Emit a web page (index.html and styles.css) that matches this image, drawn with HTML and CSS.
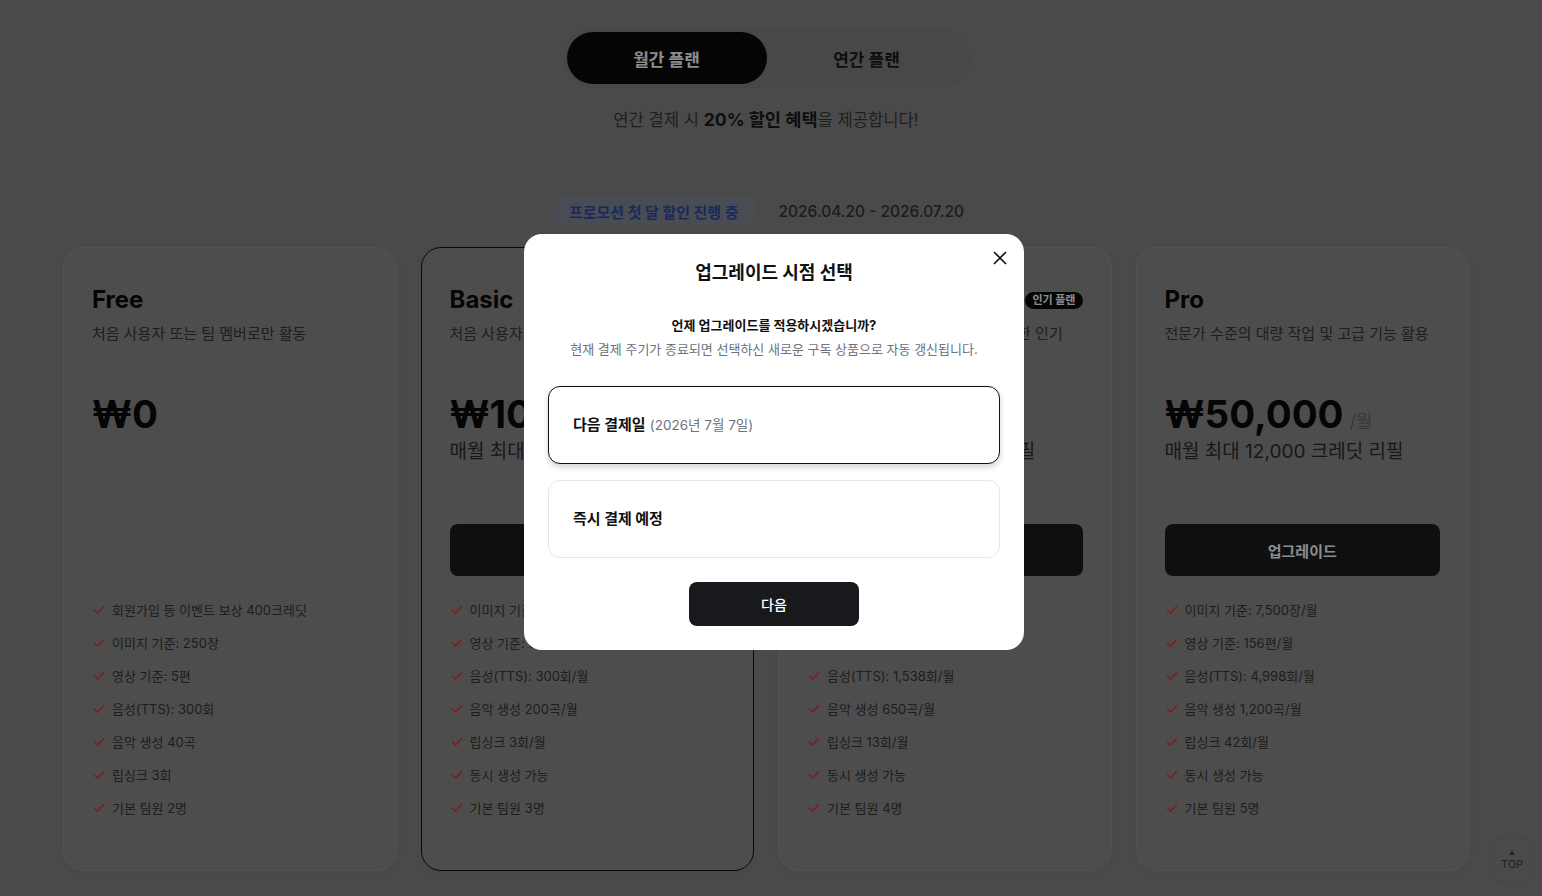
FILE: index.html
```html
<!DOCTYPE html>
<html lang="ko">
<head>
<meta charset="utf-8">
<title>요금제</title>
<link rel="stylesheet" href="styles.css">
</head>
<body>
<main class="page">
  <div class="toggle">
    <button class="toggle-btn active">월간 플랜</button>
    <button class="toggle-btn">연간 플랜</button>
  </div>
  <p class="discount">연간 결제 시 <strong>20% 할인 혜택</strong>을 제공합니다!</p>
  <div class="promo">
    <span class="promo-badge">프로모션 첫 달 할인 진행 중</span>
    <span class="promo-date">2026.04.20 - 2026.07.20</span>
  </div>

  <section class="cards">
    <article class="card">
      <div class="card-head"><h2 class="plan">Free</h2></div>
      <p class="desc">처음 사용자 또는 팀 멤버로만 활동</p>
      <div class="price-area">
        <div class="price">₩0</div>
      </div>
      <button class="cta placeholder">업그레이드</button>
      <ul class="features">
        <li><svg class="chk" viewBox="0 0 12 10"><path d="M1.5 5.2l3 3 6-6.4"/></svg>회원가입 등 이벤트 보상 400크레딧</li>
        <li><svg class="chk" viewBox="0 0 12 10"><path d="M1.5 5.2l3 3 6-6.4"/></svg>이미지 기준: 250장</li>
        <li><svg class="chk" viewBox="0 0 12 10"><path d="M1.5 5.2l3 3 6-6.4"/></svg>영상 기준: 5편</li>
        <li><svg class="chk" viewBox="0 0 12 10"><path d="M1.5 5.2l3 3 6-6.4"/></svg>음성(TTS): 300회</li>
        <li><svg class="chk" viewBox="0 0 12 10"><path d="M1.5 5.2l3 3 6-6.4"/></svg>음악 생성 40곡</li>
        <li><svg class="chk" viewBox="0 0 12 10"><path d="M1.5 5.2l3 3 6-6.4"/></svg>립싱크 3회</li>
        <li><svg class="chk" viewBox="0 0 12 10"><path d="M1.5 5.2l3 3 6-6.4"/></svg>기본 팀원 2명</li>
      </ul>
    </article>

    <article class="card current">
      <div class="card-head"><h2 class="plan">Basic</h2></div>
      <p class="desc">처음 사용자 및 개인 크리에이터에게 추천</p>
      <div class="price-area">
        <div class="price">₩10,000<span class="per">/월</span></div>
        <div class="refill">매월 최대 2,400 크레딧 리필</div>
      </div>
      <button class="cta">현재 플랜</button>
      <ul class="features">
        <li><svg class="chk" viewBox="0 0 12 10"><path d="M1.5 5.2l3 3 6-6.4"/></svg>이미지 기준: 1,500장/월</li>
        <li><svg class="chk" viewBox="0 0 12 10"><path d="M1.5 5.2l3 3 6-6.4"/></svg>영상 기준: 31편/월</li>
        <li><svg class="chk" viewBox="0 0 12 10"><path d="M1.5 5.2l3 3 6-6.4"/></svg>음성(TTS): 300회/월</li>
        <li><svg class="chk" viewBox="0 0 12 10"><path d="M1.5 5.2l3 3 6-6.4"/></svg>음악 생성 200곡/월</li>
        <li><svg class="chk" viewBox="0 0 12 10"><path d="M1.5 5.2l3 3 6-6.4"/></svg>립싱크 3회/월</li>
        <li><svg class="chk" viewBox="0 0 12 10"><path d="M1.5 5.2l3 3 6-6.4"/></svg>동시 생성 가능</li>
        <li><svg class="chk" viewBox="0 0 12 10"><path d="M1.5 5.2l3 3 6-6.4"/></svg>기본 팀원 3명</li>
      </ul>
    </article>

    <article class="card">
      <div class="card-head"><h2 class="plan">Standard</h2><span class="hot">인기 플랜</span></div>
      <p class="desc">영상 제작이 많은 크리에이터를 위한 인기 플랜</p>
      <div class="price-area">
        <div class="price">₩30,000<span class="per">/월</span></div>
        <div class="refill">매월 최대 7,200 크레딧 리필</div>
      </div>
      <button class="cta">업그레이드</button>
      <ul class="features">
        <li><svg class="chk" viewBox="0 0 12 10"><path d="M1.5 5.2l3 3 6-6.4"/></svg>이미지 기준: 4,500장/월</li>
        <li><svg class="chk" viewBox="0 0 12 10"><path d="M1.5 5.2l3 3 6-6.4"/></svg>영상 기준: 93편/월</li>
        <li><svg class="chk" viewBox="0 0 12 10"><path d="M1.5 5.2l3 3 6-6.4"/></svg>음성(TTS): 1,538회/월</li>
        <li><svg class="chk" viewBox="0 0 12 10"><path d="M1.5 5.2l3 3 6-6.4"/></svg>음악 생성 650곡/월</li>
        <li><svg class="chk" viewBox="0 0 12 10"><path d="M1.5 5.2l3 3 6-6.4"/></svg>립싱크 13회/월</li>
        <li><svg class="chk" viewBox="0 0 12 10"><path d="M1.5 5.2l3 3 6-6.4"/></svg>동시 생성 가능</li>
        <li><svg class="chk" viewBox="0 0 12 10"><path d="M1.5 5.2l3 3 6-6.4"/></svg>기본 팀원 4명</li>
      </ul>
    </article>

    <article class="card">
      <div class="card-head"><h2 class="plan">Pro</h2></div>
      <p class="desc">전문가 수준의 대량 작업 및 고급 기능 활용</p>
      <div class="price-area">
        <div class="price">₩50,000<span class="per">/월</span></div>
        <div class="refill">매월 최대 12,000 크레딧 리필</div>
      </div>
      <button class="cta">업그레이드</button>
      <ul class="features">
        <li><svg class="chk" viewBox="0 0 12 10"><path d="M1.5 5.2l3 3 6-6.4"/></svg>이미지 기준: 7,500장/월</li>
        <li><svg class="chk" viewBox="0 0 12 10"><path d="M1.5 5.2l3 3 6-6.4"/></svg>영상 기준: 156편/월</li>
        <li><svg class="chk" viewBox="0 0 12 10"><path d="M1.5 5.2l3 3 6-6.4"/></svg>음성(TTS): 4,998회/월</li>
        <li><svg class="chk" viewBox="0 0 12 10"><path d="M1.5 5.2l3 3 6-6.4"/></svg>음악 생성 1,200곡/월</li>
        <li><svg class="chk" viewBox="0 0 12 10"><path d="M1.5 5.2l3 3 6-6.4"/></svg>립싱크 42회/월</li>
        <li><svg class="chk" viewBox="0 0 12 10"><path d="M1.5 5.2l3 3 6-6.4"/></svg>동시 생성 가능</li>
        <li><svg class="chk" viewBox="0 0 12 10"><path d="M1.5 5.2l3 3 6-6.4"/></svg>기본 팀원 5명</li>
      </ul>
    </article>
  </section>
</main>

<button class="top-btn"><span class="top-arrow"></span>TOP</button>

<div class="overlay">
  <div class="modal" role="dialog">
    <button class="close" aria-label="닫기">
      <svg viewBox="0 0 14 14"><path d="M1.5 1.5l11 11M12.5 1.5l-11 11"/></svg>
    </button>
    <h3 class="modal-title">업그레이드 시점 선택</h3>
    <p class="modal-q">언제 업그레이드를 적용하시겠습니까?</p>
    <p class="modal-sub">현재 결제 주기가 종료되면 선택하신 새로운 구독 상품으로 자동 갱신됩니다.</p>
    <div class="options">
      <button class="option selected"><b>다음 결제일</b> <span class="opt-date">(2026년 7월 7일)</span></button>
      <button class="option"><b>즉시 결제 예정</b></button>
    </div>
    <button class="next">다음</button>
  </div>
</div>
</body>
</html>
```

FILE: styles.css
```css
* { box-sizing: border-box; }
html, body { margin: 0; height: 100%; overflow: hidden; }
body {
  background: #888888;
  font-family: "Inter", "Noto Sans CJK KR", "Noto Sans", sans-serif;
  color: #1a1a1a;
}
button { font-family: inherit; cursor: pointer; }

.page {
  width: 1406px;
  margin-left: 63px;
  padding-top: 28px;
  display: flex;
  flex-direction: column;
  align-items: center;
}

.toggle {
  display: flex;
  padding: 4px;
  background: #838383;
  border-radius: 30px;
  margin-left: 1px;
}
.toggle-btn {
  width: 200px;
  height: 52px;
  border: 0;
  border-radius: 26px;
  background: transparent;
  font-size: 17px;
  font-weight: 700;
  color: #1a1a1a;
}
.toggle-btn.active { background: #0a0a0a; color: #ffffff; }

.discount {
  margin: 20px 0 0;
  font-size: 16.6px;
  line-height: 24px;
  color: #3a3a3a;
}
.discount strong { font-size: 17.6px; color: #1a1a1a; font-weight: 700; }

.promo {
  margin-top: 64px;
  display: flex;
  align-items: center;
  gap: 24px;
  margin-right: 15px;
}
.promo-badge {
  height: 30px;
  padding: 0 16px;
  display: flex;
  align-items: center;
  border-radius: 9px;
  background: #878a98;
  color: #2e4da6;
  font-size: 15px;
  font-weight: 700;
}
.promo-date {
  font-size: 15.5px;
  font-weight: 500;
  color: #333333;
}

.cards {
  margin-top: 21px;
  width: 100%;
  display: grid;
  grid-template-columns: repeat(4, 1fr);
  gap: 24px;
}
.card {
  background: #8d8d8d;
  border: 1px solid #959595;
  border-radius: 20px;
  padding: 36px 28px 52px;
  box-shadow: 0 2px 8px rgba(0,0,0,0.06);
  display: flex;
  flex-direction: column;
}
.card.current { border-color: #111111; }

.card-head {
  display: flex;
  align-items: center;
  justify-content: space-between;
  height: 32px;
}
.plan {
  margin: 0;
  font-size: 24px;
  font-weight: 700;
  color: #0a0a0a;
  line-height: 32px;
}
.hot {
  background: #0a0a0a;
  color: #ffffff;
  font-size: 11px;
  font-weight: 700;
  line-height: 17px;
  padding: 0 7px;
  border-radius: 9px;
}
.desc {
  margin: 7px 0 0;
  height: 44px;
  font-size: 15px;
  line-height: 22px;
  color: #373737;
  word-break: keep-all;
}
.price-area {
  margin-top: 23px;
  height: 134px;
}
.price {
  height: 48px;
  display: flex;
  align-items: baseline;
  font-size: 38.5px;
  font-weight: 700;
  line-height: 48px;
  color: #0a0a0a;
}
.per {
  margin-left: 6px;
  font-size: 18px;
  font-weight: 400;
  color: #666666;
}
.refill {
  font-size: 19px;
  line-height: 28px;
  color: #2c2c2c;
}
.cta {
  height: 52px;
  border: 0;
  border-radius: 8px;
  background: #1a1c1f;
  color: #ffffff;
  font-size: 15px;
  font-weight: 700;
}
.cta.placeholder { visibility: hidden; }

.features {
  list-style: none;
  margin: 24px 0 0;
  padding: 0;
  display: flex;
  flex-direction: column;
  gap: 13px;
}
.features li {
  display: flex;
  align-items: center;
  font-size: 13px;
  line-height: 20px;
  color: #363636;
}
.chk {
  width: 12px;
  height: 10px;
  margin: 0 7px 0 1px;
  fill: none;
  stroke: #d84040;
  stroke-width: 1.8;
  stroke-linecap: round;
  stroke-linejoin: round;
}

.top-btn {
  position: fixed;
  right: 8px;
  bottom: 14px;
  width: 44px;
  height: 44px;
  border-radius: 10px;
  border: 1px solid #7e7e7e;
  background: #888888;
  color: #3d3d3d;
  font-size: 11px;
  display: flex;
  flex-direction: column;
  align-items: center;
  justify-content: center;
  padding: 2px 0 0;
  gap: 2px;
}
.top-arrow {
  width: 0;
  height: 0;
  border-left: 3px solid transparent;
  border-right: 3px solid transparent;
  border-bottom: 4px solid #3d3d3d;
}

.overlay {
  position: fixed;
  inset: 0;
  background: rgba(0, 0, 0, 0.45);
  display: flex;
  align-items: center;
  justify-content: center;
  padding: 0 0 12px 6px;
}
.modal {
  position: relative;
  width: 500px;
  background: #ffffff;
  border-radius: 18px;
  padding: 24px;
  display: flex;
  flex-direction: column;
  align-items: center;
}
.close {
  position: absolute;
  top: 16px;
  right: 16px;
  width: 16px;
  height: 16px;
  padding: 0;
  border: 0;
  background: transparent;
  display: flex;
}
.close svg {
  width: 14px;
  height: 14px;
  margin: 1px;
  stroke: #111111;
  stroke-width: 1.7;
  stroke-linecap: round;
  fill: none;
}
.modal-title {
  margin: 0;
  font-size: 18px;
  line-height: 28px;
  font-weight: 700;
  color: #111111;
  padding-top: 1px;
}
.modal-q {
  margin: 28px 0 0;
  font-size: 13px;
  line-height: 20px;
  font-weight: 700;
  color: #111111;
}
.modal-sub {
  margin: 4px 0 0;
  font-size: 13px;
  line-height: 20px;
  color: #6b7280;
}
.options {
  margin-top: 27px;
  width: 100%;
  display: flex;
  flex-direction: column;
  gap: 16px;
}
.option {
  height: 78px;
  border: 1px solid #e5e7eb;
  border-radius: 12px;
  background: #ffffff;
  text-align: left;
  padding: 0 24px 3px;
  font-size: 15px;
  color: #111111;
}
.option b { font-weight: 700; }
.option.selected {
  border: 1.5px solid #111111;
  box-shadow: 0 3px 6px rgba(0,0,0,0.18);
}
.opt-date {
  font-size: 13.5px;
  color: #6b7280;
}
.next {
  margin-top: 24px;
  width: 170px;
  height: 44px;
  border: 0;
  border-radius: 8px;
  background: #18191c;
  color: #ffffff;
  font-size: 14px;
  font-weight: 500;
}
```
